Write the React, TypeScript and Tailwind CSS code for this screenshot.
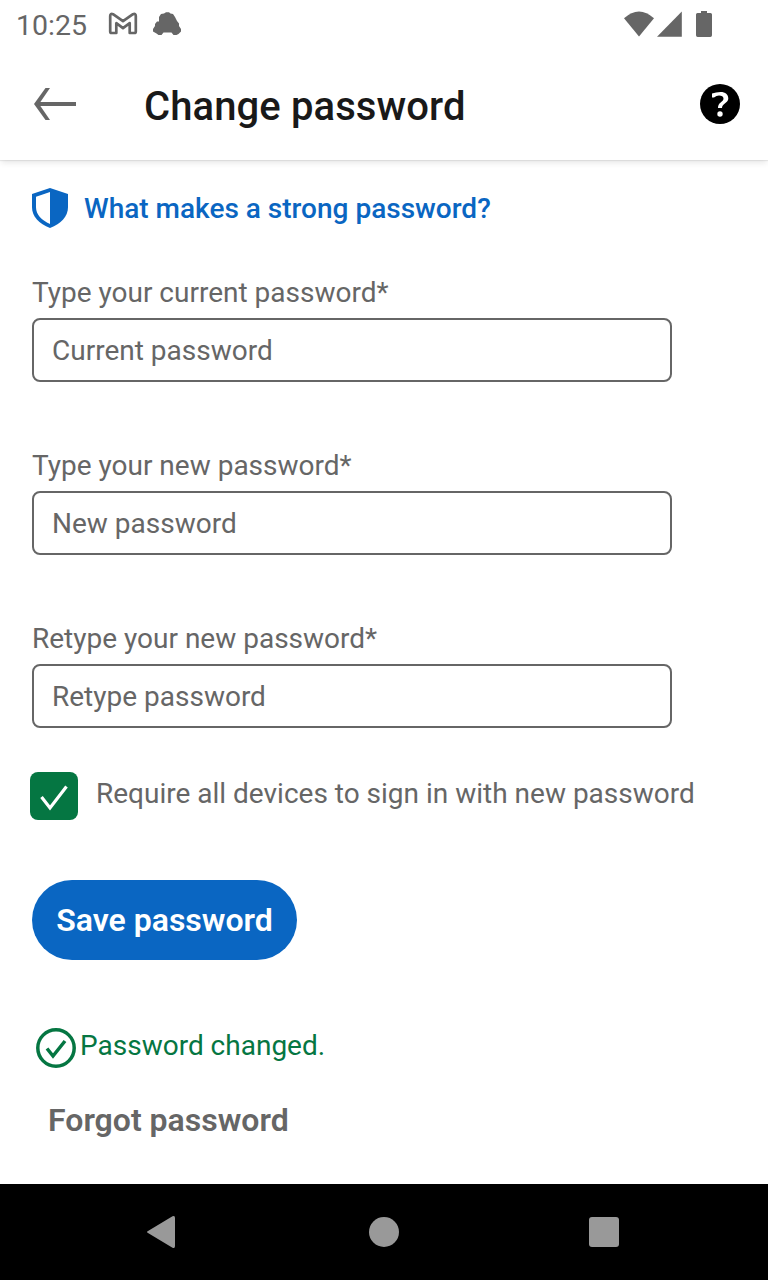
import React, { useState } from "react";

function StatusBar() {
  return (
    <div className="flex h-12 shrink-0 items-start text-[#666666]">
      <span className="ml-4 mt-1.5 w-[92px] text-[28.5px] leading-10 font-normal">10:25</span>
      <svg className="mt-2 h-8 w-[80px]" viewBox="108 8 80 32" fill="currentColor">
        <path
          d="M110.200 16Q110.200 13.200 113 14.200L123 21.200L133 14.200Q135.800 13.200 135.800 16V31.500Q135.800 33 134.300 33H129.700V23.200L123 28.200L116.300 23.200V33H111.700Q110.200 33 110.200 31.500Z"
          fill="none"
          stroke="currentColor"
          strokeWidth="2.700"
          strokeLinejoin="round"
        />
        <path d="M159 17L161 14L164 13.500L166 12.300H169L170.500 13.500L173 14L175 17L177 21L179 23.500V26L181 29V31.500L178.500 34L176.500 35H173.500L171.500 32.500H163.500L161.500 35H158.500L156.500 33.500L153 31.500V29L155 26V24L157 21.500H159Z" />
      </svg>
      <svg className="ml-auto mr-[52px] mt-2 h-8 w-[96px]" viewBox="620 8 96 32" fill="currentColor">
        <path d="M639 36.500L624 18.300Q639 4.800 654 18.300Z" />
        <path d="M657 36.700L681.800 11.500V36.700Z" />
        <path d="M701 11H707V13H710.500Q712 13 712 14.500V35.300Q712 37 710.300 37H697.700Q696 37 696 35.300V14.500Q696 13 697.500 13H701Z" />
      </svg>
    </div>
  );
}

function Header() {
  return (
    <header className="flex h-28 shrink-0 items-center pl-[32px] pr-[28px] shadow-[0_1px_1px_rgba(0,0,0,0.07),0_4px_6px_-1px_rgba(0,0,0,0.09)]">
      <button aria-label="Back" className="w-[112px]">
        <svg className="h-9 w-[46px]" viewBox="32 86 46 36" fill="none" stroke="#666666" strokeWidth="4">
          <path d="M76 104H37" />
          <path d="M50 88H45.500L34 104L45.500 120H50L39 104Z" fill="#666666" stroke="none" />
        </svg>
      </button>
      <h1 className="mt-1.5 text-[40px] leading-[48px] font-medium tracking-[0.1px] text-[#191919]">Change password</h1>
      <button aria-label="Help" className="ml-auto">
        <svg className="h-10 w-10" viewBox="0 0 40 40">
          <circle cx="20" cy="20" r="20" />
          <path
            d="M12 9.500Q16 8 20.500 8C25.500 8 28.300 10.600 28.300 14.500C28.300 19 22 19.500 22 24H18C18 18 23.500 18 23.500 14.700C23.500 12.200 21.700 11.400 19 11.400Q16.500 11.400 14 13.500H12Z"
            fill="#fff"
          />
          <circle cx="20" cy="30" r="2.700" fill="#fff" />
        </svg>
      </button>
    </header>
  );
}

function Field({ label, placeholder }: { label: string; placeholder: string }) {
  return (
    <label className="flex h-[173px] flex-col items-start text-[28px] text-[#666666]">
      <span className="mb-[9px] leading-8">{label}</span>
      <input
        type="password"
        placeholder={placeholder}
        className="h-16 w-[640px] rounded-lg border-2 border-[#666666] bg-white px-[18px] placeholder:text-[#666666] placeholder:opacity-100"
      />
    </label>
  );
}

function NavigationBar() {
  return (
    <nav className="flex h-24 shrink-0 items-center bg-black px-[144px]">
      <svg className="h-9 w-9" viewBox="144 1214 36 36" fill="#999">
        <path d="M148 1231L172.500 1216.300Q175 1215 175 1218V1246Q175 1249 172.500 1247.700L148 1233Q146 1232 148 1231Z" />
      </svg>
      <div className="ml-[189px] size-[30px] rounded-full bg-[#999]" />
      <div className="ml-[190px] size-[30px] rounded-[3px] bg-[#999]" />
    </nav>
  );
}

export default function App() {
  const [required, setRequired] = useState(true);
  return (
    <div className="flex h-[1280px] w-[768px] flex-col overflow-hidden bg-white font-['Roboto',sans-serif]">
      <StatusBar />
      <Header />
      <main className="flex flex-1 flex-col items-start pl-8">
        <a className="mt-7 flex h-10 items-center gap-4 text-[28px] font-medium text-[#0a66c2]">
          <svg className="h-10 w-9" viewBox="0 0 36 40">
            <path d="M18 0L36 6V19C36 29 29 35.500 18 40C7 35.500 0 29 0 19V6Z" fill="#0a66c2" />
            <path d="M18 4L4 8.700V19C4 27 9.500 32 18 36Z" fill="#fff" />
          </svg>
          <span className="mt-0.5">What makes a strong password?</span>
        </a>
        <div className="mt-[49px] flex flex-col">
          <Field label="Type your current password*" placeholder="Current password" />
          <Field label="Type your new password*" placeholder="New password" />
          <Field label="Retype your new password*" placeholder="Retype password" />
        </div>
        <button
          role="checkbox"
          aria-checked={required}
          onClick={() => setRequired(!required)}
          className="-ml-0.5 -mt-6 flex h-12 items-start gap-[18px] text-[28px] text-[#666666]"
        >
          <span className="size-12 rounded-lg bg-[#057642]">
            {required && (
              <svg className="size-12" viewBox="0 0 48 48" fill="none" stroke="#fff" strokeWidth="3.200">
                <path d="M11.500 25L20 36L36.500 14.500" />
              </svg>
            )}
          </span>
          <span className="mt-1.5 leading-8">Require all devices to sign in with new password</span>
        </button>
        <button className="mt-[60px] h-20 w-[265px] rounded-full bg-[#0a66c2] text-[32px] font-semibold text-white">
          Save password
        </button>
        <div className="ml-1 mt-[68px] flex h-10 items-start gap-1 text-[28px] text-[#057642]">
          <svg className="size-10" viewBox="0 0 40 40" fill="none" stroke="currentColor" strokeWidth="3.500">
            <circle cx="20" cy="20" r="18.200" />
            <path d="M11 20.500L17 28L29 13" />
          </svg>
          <span className="mt-0.5 leading-8">Password changed.</span>
        </div>
        <button className="ml-4 mt-8 text-[32px] leading-10 font-semibold text-[#666666]">Forgot password</button>
      </main>
      <NavigationBar />
    </div>
  );
}
